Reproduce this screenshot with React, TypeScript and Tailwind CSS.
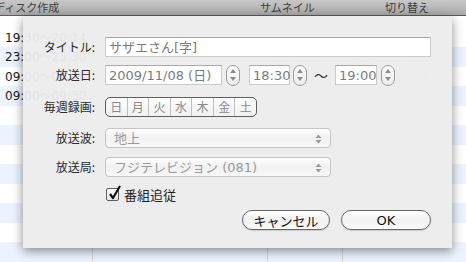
import React from "react";

function Stepper() {
  return (
    <div className="w-[14px] h-[21px] shrink-0 rounded-[7px] border border-[#9a9a9a] bg-gradient-to-b from-[#fdfdfd] to-[#ececec] flex flex-col items-center justify-center gap-[4px]">
      <svg width="6" height="4" viewBox="0 0 6 4">
        <path d="M3 0L6 4H0Z" fill="#8a8a8a" />
      </svg>
      <svg width="6" height="4" viewBox="0 0 6 4">
        <path d="M0 0H6L3 4Z" fill="#8a8a8a" />
      </svg>
    </div>
  );
}

function Field({ w, children }: { w: string; children?: React.ReactNode }) {
  return (
    <div
      className={`${w} h-[20px] shrink-0 bg-white border border-[#cbcbcb] border-t-[#a8a8a8] flex items-center pl-[3px] text-[13px] text-[#7b7b7b] leading-none`}
    >
      {children}
    </div>
  );
}

function Popup({ children }: { children: React.ReactNode }) {
  return (
    <div className="relative w-[226px] h-[20px] rounded-[4px] border border-[#c4c4c4] bg-gradient-to-b from-[#fefefe] via-[#f1f1f1] to-[#f8f8f8] flex items-center pl-[8px] text-[13px] text-[#9a9a9a] leading-none">
      <span>{children}</span>
      <svg className="absolute right-[8px] top-[5px]" width="7" height="10" viewBox="0 0 7 10">
        <path d="M3.5 0.5L6.5 4H0.5Z" fill="#9a9a9a" />
        <path d="M0.5 6H6.5L3.5 9.5Z" fill="#9a9a9a" />
      </svg>
    </div>
  );
}

const days = ["日", "月", "火", "水", "木", "金", "土"];

const tableRows: { h: string; blue: boolean; c1: string; c3: string; c4: string }[] = [
  { h: "h-[12px]", blue: false, c1: "", c3: "", c4: "" },
  { h: "h-[19px]", blue: false, c1: "19:30〜20:14", c3: "", c4: "" },
  { h: "h-[20px]", blue: true, c1: "23:00〜23:30", c3: "Ch. 011", c4: "NHK総合・東京" },
  { h: "h-[19px]", blue: false, c1: "09:00〜09:30", c3: "Ch. 041", c4: "日本テレビ・東京" },
  { h: "h-[20px]", blue: true, c1: "09:00〜09:30", c3: "Ch. 081", c4: "フジテレビジョン" },
  { h: "h-[19px]", blue: false, c1: "", c3: "", c4: "" },
  { h: "h-[20px]", blue: true, c1: "", c3: "", c4: "" },
  { h: "h-[19px]", blue: false, c1: "", c3: "", c4: "" },
  { h: "h-[20px]", blue: true, c1: "", c3: "", c4: "" },
  { h: "h-[19px]", blue: false, c1: "", c3: "", c4: "" },
  { h: "h-[20px]", blue: true, c1: "", c3: "", c4: "" },
  { h: "h-[19px]", blue: false, c1: "", c3: "", c4: "" },
  { h: "h-[20px]", blue: true, c1: "", c3: "", c4: "" },
];

export default function App() {
  return (
    <div className="relative w-[466px] h-[262px] overflow-hidden bg-white font-['DejaVu_Sans','Noto_Sans_CJK_JP',sans-serif]">
      {/* header */}
      <div className="h-[16px] border-b border-[#5c5c5c] bg-gradient-to-b from-[#c8c8c8] to-[#a9a9a9] flex items-center text-[11px] leading-none text-[#3c3c3c] font-['Noto_Sans_CJK_JP',sans-serif]">
        <div className="w-[260px] shrink-0 -ml-[6px]">ディスク作成</div>
        <div className="w-[125px] shrink-0 ml-[6px]">サムネイル</div>
        <div className="shrink-0">切り替え</div>
      </div>
      {/* table */}
      <div className="flex flex-col text-[12px] leading-none text-[#1a1a1a]">
        {tableRows.map((r, i) => (
          <div key={i} className={`${r.h} shrink-0 flex ${r.blue ? "bg-[#edf3fe]" : "bg-white"}`}>
            <div className="w-[93px] shrink-0 border-r border-[#d6d6d6] flex items-center pl-[5px] whitespace-nowrap overflow-hidden">
              {r.c1}
            </div>
            <div className="w-[175px] shrink-0 border-r border-[#d6d6d6]" />
            <div className="w-[75px] shrink-0 border-r border-[#d6d6d6] flex items-center pl-[4px] whitespace-nowrap overflow-hidden text-[#cfcfcf]">
              {r.c3}
            </div>
            <div className="flex-1 flex items-center pl-[5px] whitespace-nowrap overflow-hidden text-[#cfcfcf]">{r.c4}</div>
          </div>
        ))}
      </div>

      {/* sheet dialog */}
      <div className="absolute left-[23px] top-[16px] w-[429px] h-[232px] bg-[#ececec]/[0.96] shadow-[0_3px_10px_rgba(0,0,0,0.45)] pr-[21px]">
        <div className="flex flex-col">
          {/* title */}
          <div className="mt-[21px] flex items-center h-[20px]">
            <div className="w-[72px] shrink-0 text-right text-[12px] text-[#2a2a2a] leading-none font-['Noto_Sans_CJK_JP',sans-serif]">
              タイトル:
            </div>
            <div className="ml-[10px] flex-1 h-[20px] bg-white border border-[#cbcbcb] border-t-[#a8a8a8] flex items-center pl-[3px] text-[13px] text-[#7b7b7b] leading-none">
              サザエさん[字]
            </div>
          </div>
          {/* date */}
          <div className="mt-[8px] flex items-center h-[20px]">
            <div className="w-[72px] shrink-0 text-right text-[12px] text-[#2a2a2a] leading-none font-['Noto_Sans_CJK_JP',sans-serif]">
              放送日:
            </div>
            <div className="ml-[10px] flex items-center">
              <Field w="w-[117px]">2009/11/08 (日)</Field>
              <div className="ml-[4px]">
                <Stepper />
              </div>
              <div className="ml-[9px]">
                <Field w="w-[41px]">18:30</Field>
              </div>
              <div className="ml-[3px]">
                <Stepper />
              </div>
              <div className="ml-[7px] w-[20px] text-[14px] text-[#333] leading-none font-['Noto_Sans_CJK_JP',sans-serif]">
                〜
              </div>
              <div className="ml-[1px]">
                <Field w="w-[42px]">19:00</Field>
              </div>
              <div className="ml-[4px]">
                <Stepper />
              </div>
            </div>
          </div>
          {/* weekly */}
          <div className="mt-[12px] flex items-center h-[20px]">
            <div className="w-[72px] shrink-0 text-right text-[12px] text-[#2a2a2a] leading-none font-['Noto_Sans_CJK_JP',sans-serif]">
              毎週録画:
            </div>
            <div className="ml-[10px] w-[152px] h-[20px] rounded-[5px] border border-[#5f5f5f] bg-gradient-to-b from-[#fdfdfd] to-[#f1f1f1] flex overflow-hidden">
              {days.map((d, i) => (
                <div
                  key={d}
                  className={`flex-1 flex items-center justify-center text-[12px] text-[#8a8a8a] leading-none font-['Noto_Sans_CJK_JP',sans-serif] ${
                    i > 0 ? "border-l border-[#bdbdbd]" : ""
                  }`}
                >
                  {d}
                </div>
              ))}
            </div>
          </div>
          {/* wave */}
          <div className="mt-[11px] flex items-center h-[20px]">
            <div className="w-[72px] shrink-0 text-right text-[12px] text-[#2a2a2a] leading-none font-['Noto_Sans_CJK_JP',sans-serif]">
              放送波:
            </div>
            <div className="ml-[10px]">
              <Popup>地上</Popup>
            </div>
          </div>
          {/* station */}
          <div className="mt-[9px] flex items-center h-[20px]">
            <div className="w-[72px] shrink-0 text-right text-[12px] text-[#2a2a2a] leading-none font-['Noto_Sans_CJK_JP',sans-serif]">
              放送局:
            </div>
            <div className="ml-[10px]">
              <Popup>フジテレビジョン (081)</Popup>
            </div>
          </div>
          {/* checkbox */}
          <div className="mt-[11px] flex items-center h-[13px] ml-[83px]">
            <div className="relative w-[13px] h-[13px] rounded-[2px] border border-[#5e5e5e] bg-gradient-to-b from-white to-[#e6e6e6]">
              <svg className="absolute left-[1px] -top-[4px]" width="14" height="16" viewBox="0 0 14 16">
                <path d="M2 9 L5 13 L12 1" stroke="#111" strokeWidth="2.2" fill="none" strokeLinejoin="round" />
              </svg>
            </div>
            <span className="ml-[5px] text-[13px] text-[#1e1e1e] leading-none font-['Noto_Sans_CJK_JP',sans-serif]">番組追従</span>
          </div>
          {/* buttons */}
          <div className="mt-[9px] flex justify-end gap-[11px]">
            <button className="w-[88px] h-[20px] rounded-full border border-[#666] bg-gradient-to-b from-white via-[#f1f1f1] to-[#fafafa] shadow-[0_1px_1px_rgba(0,0,0,0.15)] text-[13px] text-[#111] leading-none font-['Noto_Sans_CJK_JP',sans-serif]">
              キャンセル
            </button>
            <button className="w-[90px] h-[20px] rounded-full border border-[#666] bg-gradient-to-b from-white via-[#f1f1f1] to-[#fafafa] shadow-[0_1px_1px_rgba(0,0,0,0.15)] text-[13px] text-[#111] leading-none">
              OK
            </button>
          </div>
        </div>
      </div>
    </div>
  );
}
